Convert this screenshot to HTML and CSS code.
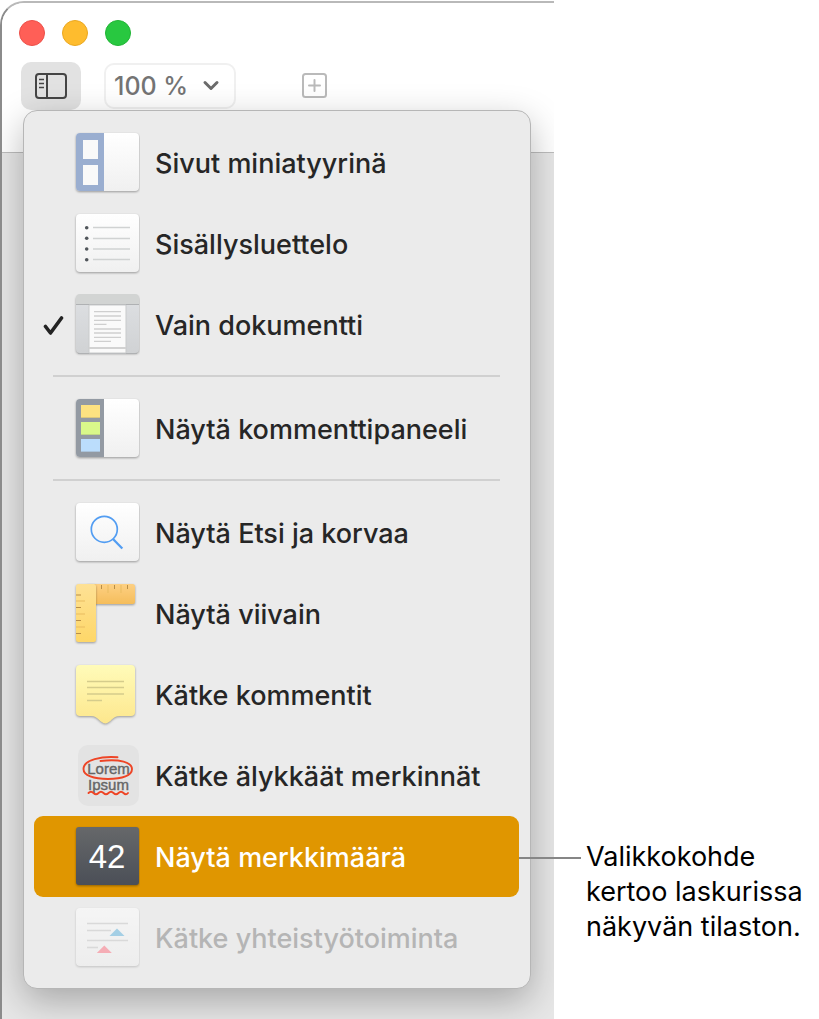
FILE: index.html
```html
<!DOCTYPE html>
<html lang="fi">
<head>
<meta charset="utf-8">
<title>Näytä-valikko</title>
<link rel="stylesheet" href="styles.css">
</head>
<body>
<main class="page">
  <section class="window">
    <header class="toolbar">
      <div class="lights">
        <button class="light light-close" aria-label="Sulje"></button>
        <button class="light light-minimize" aria-label="Pienennä"></button>
        <button class="light light-zoom" aria-label="Suurenna"></button>
      </div>
      <div class="tools">
        <button class="tool tool-view" aria-label="Näytä">
          <svg width="34" height="28" viewBox="0 0 34 28" fill="none" stroke="#454545" stroke-width="2">
            <rect x="2" y="2" width="30" height="24" rx="3"/>
            <path d="M13 2v24"/>
            <path d="M5 7.500h5M5 11.500h5M5 15.500h5" stroke-width="1.500"/>
          </svg>
        </button>
        <div class="zoom">
          <select class="zoom-select" aria-label="Zoomaus"><option>100 %</option></select>
          <svg class="zoom-arrow" width="18" height="12" viewBox="0 0 18 12" fill="none" stroke="#6b6b6b" stroke-width="3" stroke-linecap="round" stroke-linejoin="round"><path d="M3 2.500l6 6 6-6"/></svg>
        </div>
        <button class="tool tool-add" aria-label="Lisää sivu">
          <svg width="28" height="28" viewBox="0 0 28 28" fill="none" stroke="#bababa" stroke-width="2">
            <rect x="2" y="2" width="23" height="23" rx="2.500"/>
            <path d="M13.500 8v11M8 13.500h11" stroke-linecap="round"/>
          </svg>
        </button>
      </div>
    </header>
    <div class="canvas">
      <div class="menu" role="menu">
        <button class="item" role="menuitem">
          <span class="check"></span>
          <svg class="icon" viewBox="0 0 66 64">
            <defs>
              <linearGradient id="paper" x2="0" y2="1"><stop stop-color="#fff"/><stop offset="1" stop-color="#f0f0f0"/></linearGradient>
            </defs>
            <rect class="card" x="2" y="2" width="63" height="58" rx="4"/>
            <path d="M6 2h24v58H6a4 4 0 0 1-4-4V6a4 4 0 0 1 4-4z" fill="#9aaed0"/>
            <path d="M9 9h15v19H9zM9 34h15v20H9z" fill="#f9f9f9"/>
          </svg>
          <span class="label">Sivut miniatyyrinä</span>
        </button>
        <button class="item" role="menuitem">
          <span class="check"></span>
          <svg class="icon" viewBox="0 0 66 64">
            <rect class="card" x="2" y="2" width="63" height="58" rx="4"/>
            <g fill="#50555a"><circle cx="12.700" cy="15.700" r="1.800"/><circle cx="12.700" cy="26.300" r="1.800"/><circle cx="12.700" cy="37" r="1.800"/><circle cx="12.700" cy="47.700" r="1.800"/></g>
            <path d="M19 15.500h37M19 26.500h37M19 37h37M19 47.500h37" stroke="#d0d2d2" stroke-width="1.300"/>
          </svg>
          <span class="label">Sisällysluettelo</span>
        </button>
        <button class="item" role="menuitem">
          <span class="check"><svg width="22" height="24" viewBox="0 0 22 24" fill="none" stroke="#232323" stroke-width="3.600" stroke-linecap="round" stroke-linejoin="round"><path d="M3.500 13.500l5 6.500L19.500 5"/></svg></span>
          <svg class="icon" viewBox="0 0 66 64">
            <defs><linearGradient id="desk" x2="0" y2="1"><stop stop-color="#dee0e3"/><stop offset="1" stop-color="#d0d2d4"/></linearGradient></defs>
            <rect class="shade" x="2" y="2" width="63" height="58" rx="4" fill="url(#desk)"/>
            <path d="M2 11V5a4 4 0 0 1 4-4h55a4 4 0 0 1 4 4v6z" fill="#d2d4d3"/>
            <path d="M2 11.500h63M4 60.500h59" stroke="#afb1b3"/>
            <path d="M15 12h37v48H15z" fill="#fafafa" stroke="#c8cacb"/>
            <path d="M20 18.700h27M20 23h27M20 27.300h27M20 31.300h12.500M20 36h27M20 40h27M20 44.300h27M20 48.300h17" stroke="#cfcfcf" stroke-width="1.300"/>
            <path d="M15 55h37" stroke="#d2d2d2" stroke-width="2"/>
          </svg>
          <span class="label">Vain dokumentti</span>
        </button>
        <hr class="separator">
        <button class="item" role="menuitem">
          <span class="check"></span>
          <svg class="icon" viewBox="0 0 66 64">
            <rect class="card" x="2" y="2" width="63" height="58" rx="4"/>
            <path d="M6 2h24v58H6a4 4 0 0 1-4-4V6a4 4 0 0 1 4-4z" fill="#939aa3"/>
            <path d="M7 8h19v13H7z" fill="#fde281"/><path d="M7 25h19v13H7z" fill="#d9f88a"/><path d="M7 42h19v13H7z" fill="#bbddfc"/>
            <path d="M7 20.500h19M7 37.500h19M7 54.500h19" stroke="#777" stroke-opacity=".25"/>
          </svg>
          <span class="label">Näytä kommenttipaneeli</span>
        </button>
        <hr class="separator">
        <button class="item" role="menuitem">
          <span class="check"></span>
          <svg class="icon" viewBox="0 0 66 64">
            <rect class="card" x="2" y="2" width="63" height="58" rx="4"/>
            <g fill="none" stroke="#529df2"><circle cx="30.300" cy="28.300" r="13" stroke-width="1.700"/><path d="M39 38l9.300 9.500" stroke-width="2.300"/></g>
          </svg>
          <span class="label">Näytä Etsi ja korvaa</span>
        </button>
        <button class="item" role="menuitem">
          <span class="check"></span>
          <svg class="icon" viewBox="0 0 66 64">
            <defs>
              <linearGradient id="ruler" x2="0" y2="1"><stop stop-color="#fee195"/><stop offset="1" stop-color="#fed768"/></linearGradient>
              <linearGradient id="rulerTop" x2="0" y2="1"><stop stop-color="#fdd083"/><stop offset="1" stop-color="#f5bd5b"/></linearGradient>
            </defs>
            <rect class="shade" x="12" y="2" width="49" height="20" rx="2.500" fill="url(#rulerTop)"/>
            <rect class="shade" x="2" y="2" width="20" height="58" rx="2.500" fill="url(#ruler)"/>
            <path d="M2 13h5M2 25.500h5M2 38.500h5M2 51.500h5M27.500 3v4M40.500 3v4M53.500 3v4" stroke="#b98f47"/>
            <path d="M2 19h9M2 32h9M2 45h9M34 3v8M47 3v8" stroke="#e9bc60"/>
          </svg>
          <span class="label">Näytä viivain</span>
        </button>
        <button class="item" role="menuitem">
          <span class="check"></span>
          <svg class="icon" viewBox="0 0 66 64">
            <defs><linearGradient id="note" x2="0" y2="1"><stop stop-color="#fffbb9"/><stop offset="1" stop-color="#fde78d"/></linearGradient></defs>
            <path class="shade" d="M6 2h51a4 4 0 0 1 4 4v43a4 4 0 0 1-4 4H46c-8 0-9 7-14.700 7.500C26 60 24 53 17 53H6a4 4 0 0 1-4-4V6a4 4 0 0 1 4-4z" fill="url(#note)"/>
            <path d="M13 18.500h37M13 24.500h37M13 31h37M13 37.500h15" stroke="#d5cc8c" stroke-width="1.300"/>
          </svg>
          <span class="label">Kätke kommentit</span>
        </button>
        <button class="item" role="menuitem">
          <span class="check"></span>
          <svg class="icon" viewBox="0 0 66 64">
            <rect x="4" y="1" width="61" height="61" rx="10" fill="#e3e3e3"/>
            <text class="lorem" x="34.500" y="29.500">Lorem</text>
            <text class="lorem" x="34.500" y="45.500">Ipsum</text>
            <g fill="none" stroke="#ee4526" stroke-width="1.900" stroke-linecap="round">
              <path d="M43.500 13.200C28 12 9.500 15.500 9.500 25c0 6.500 10 10 24.500 10s24-3.500 24-10c0-6.500-12-10.500-31.500-8"/>
              <path d="M14.500 49q2.500-2.500 5 0t5 0 5 0 5 0 5 0 5 0 5 0 4.500 0"/>
            </g>
          </svg>
          <span class="label">Kätke älykkäät merkinnät</span>
        </button>
        <button class="item item-selected" role="menuitem">
          <span class="check"></span>
          <svg class="icon" viewBox="0 0 66 64">
            <defs><linearGradient id="slate" x2="0" y2="1"><stop stop-color="#66686a"/><stop offset="1" stop-color="#4b4f57"/></linearGradient></defs>
            <rect class="shade" x="2" y="2" width="63" height="58" rx="3" fill="url(#slate)"/>
            <text class="count" x="33" y="43">42</text>
          </svg>
          <span class="label">Näytä merkkimäärä</span>
        </button>
        <button class="item item-disabled" role="menuitem" disabled>
          <span class="check"></span>
          <svg class="icon" viewBox="0 0 66 64">
            <rect class="card" x="2" y="2" width="63" height="58" rx="4"/>
            <path d="M13 17.500h41M13 24.500h24M13 34.500h41M13 41.500h11" stroke="#c8c8c8" stroke-width="1.300"/>
            <path d="M43 22.500l7.500 7.500h-15z" fill="#5fb4e0"/>
            <path d="M30.300 39.500l7.500 7.500h-15z" fill="#ff7080"/>
          </svg>
          <span class="label">Kätke yhteistyötoiminta</span>
        </button>
      </div>
    </div>
  </section>
  <aside class="callout">
    <p class="callout-text">Valikkokohde kertoo laskurissa näkyvän tilaston.</p>
  </aside>
</main>
</body>
</html>
```
FILE: styles.css
```css
* { box-sizing: border-box; }

body {
  margin: 0;
  background: #fff;
  font-family: Inter, "Liberation Sans", sans-serif;
}

button {
  border: 0;
  padding: 0;
  background: none;
  font: inherit;
  color: inherit;
}

.page {
  display: flex;
  min-height: 100vh;
}

.window {
  position: relative;
  display: flex;
  flex: 0 0 554px;
  flex-direction: column;
  overflow: hidden;
  margin-top: 1px;
  border: 2px solid #8b8b8b;
  border-top-color: #b9b9b9;
  border-right: 0;
  border-bottom: 0;
  border-top-left-radius: 24px;
}

/* Darker part of the top edge */
.window::before {
  content: "";
  position: absolute;
  top: -2px;
  right: 0;
  width: 219px;
  height: 2px;
  background: #929292;
}

.toolbar {
  display: flex;
  flex-direction: column;
  gap: 16px;
  height: 150px;
  padding: 17px 17px 16px;
  border-bottom: 1px solid #bdbdbd;
  background: #fff;
}

.lights {
  display: flex;
  gap: 17px;
}

.light {
  width: 26px;
  height: 26px;
  border: 1px solid;
  border-radius: 50%;
}

.light-close { background: #ff5f57; border-color: #ec4f48; }
.light-minimize { background: #febc2e; border-color: #eaa71f; }
.light-zoom { background: #28c840; border-color: #20b434; }

.tools {
  display: flex;
  align-items: center;
  padding-left: 2px;
}

.tool {
  display: flex;
  align-items: center;
  justify-content: center;
}

.tool-view {
  width: 60px;
  height: 48px;
  border-radius: 10px;
  background: #e2e2e2;
}

.zoom {
  display: flex;
  align-items: center;
  width: 132px;
  height: 46px;
  margin: 0 65px 0 23px;
  padding-left: 8px;
  border: 2px solid #f0f0f0;
  border-radius: 10px;
}

.zoom-select {
  width: 88px;
  padding: 0;
  border: 0;
  background: none;
  appearance: none;
  color: #747474;
  font: 500 25px Inter, sans-serif;
}

.canvas {
  flex: 1;
  padding: 0 23px 29px 21px;
  background: #e7e7e7;
}

.menu {
  position: relative;
  margin-top: -43px;
  padding: 11px 11px 10px 10px;
  border: 1px solid #b6b6b6;
  border-radius: 14px;
  background: #ebebeb;
  box-shadow: 0 12px 36px rgba(0, 0, 0, 0.28);
}

.item {
  display: flex;
  align-items: center;
  width: 100%;
  height: 81px;
  padding-left: 8px;
  border-radius: 9px;
  color: #262626;
  font-size: 27px;
  font-weight: 500;
  text-align: left;
  white-space: nowrap;
}

.item-selected {
  background: #e09600;
  color: #fff;
}

.item-disabled { color: #b5b5b5; }
.item-disabled .icon { opacity: 0.5; }

.check {
  display: flex;
  flex: 0 0 32px;
}

.icon {
  flex: 0 0 66px;
  height: 64px;
  margin-right: 15px;
}

.label { padding-top: 1px; }

.card { fill: url(#paper); }

.card,
.shade { filter: drop-shadow(0 1px 1px rgba(0, 0, 0, 0.35)); }

.lorem {
  fill: #666;
  stroke: #666;
  stroke-width: 0.4px;
  font: 15px "Liberation Sans", sans-serif;
  text-anchor: middle;
}

.count {
  fill: #fff;
  font: 33px "Liberation Sans", sans-serif;
  text-anchor: middle;
}

.separator {
  height: 2px;
  margin: 10px 19px 11px;
  border: 0;
  background: #d0d0d0;
}

.callout {
  position: relative;
  flex: 1;
  padding: 839px 0 0 32px;
}

/* Leader line to the selected menu item */
.callout::before {
  content: "";
  position: absolute;
  top: 857px;
  left: -35px;
  width: 62px;
  height: 2px;
  background: #868686;
}

.callout-text {
  margin: 0;
  color: #000;
  font-size: 27px;
  line-height: 35px;
}
```
